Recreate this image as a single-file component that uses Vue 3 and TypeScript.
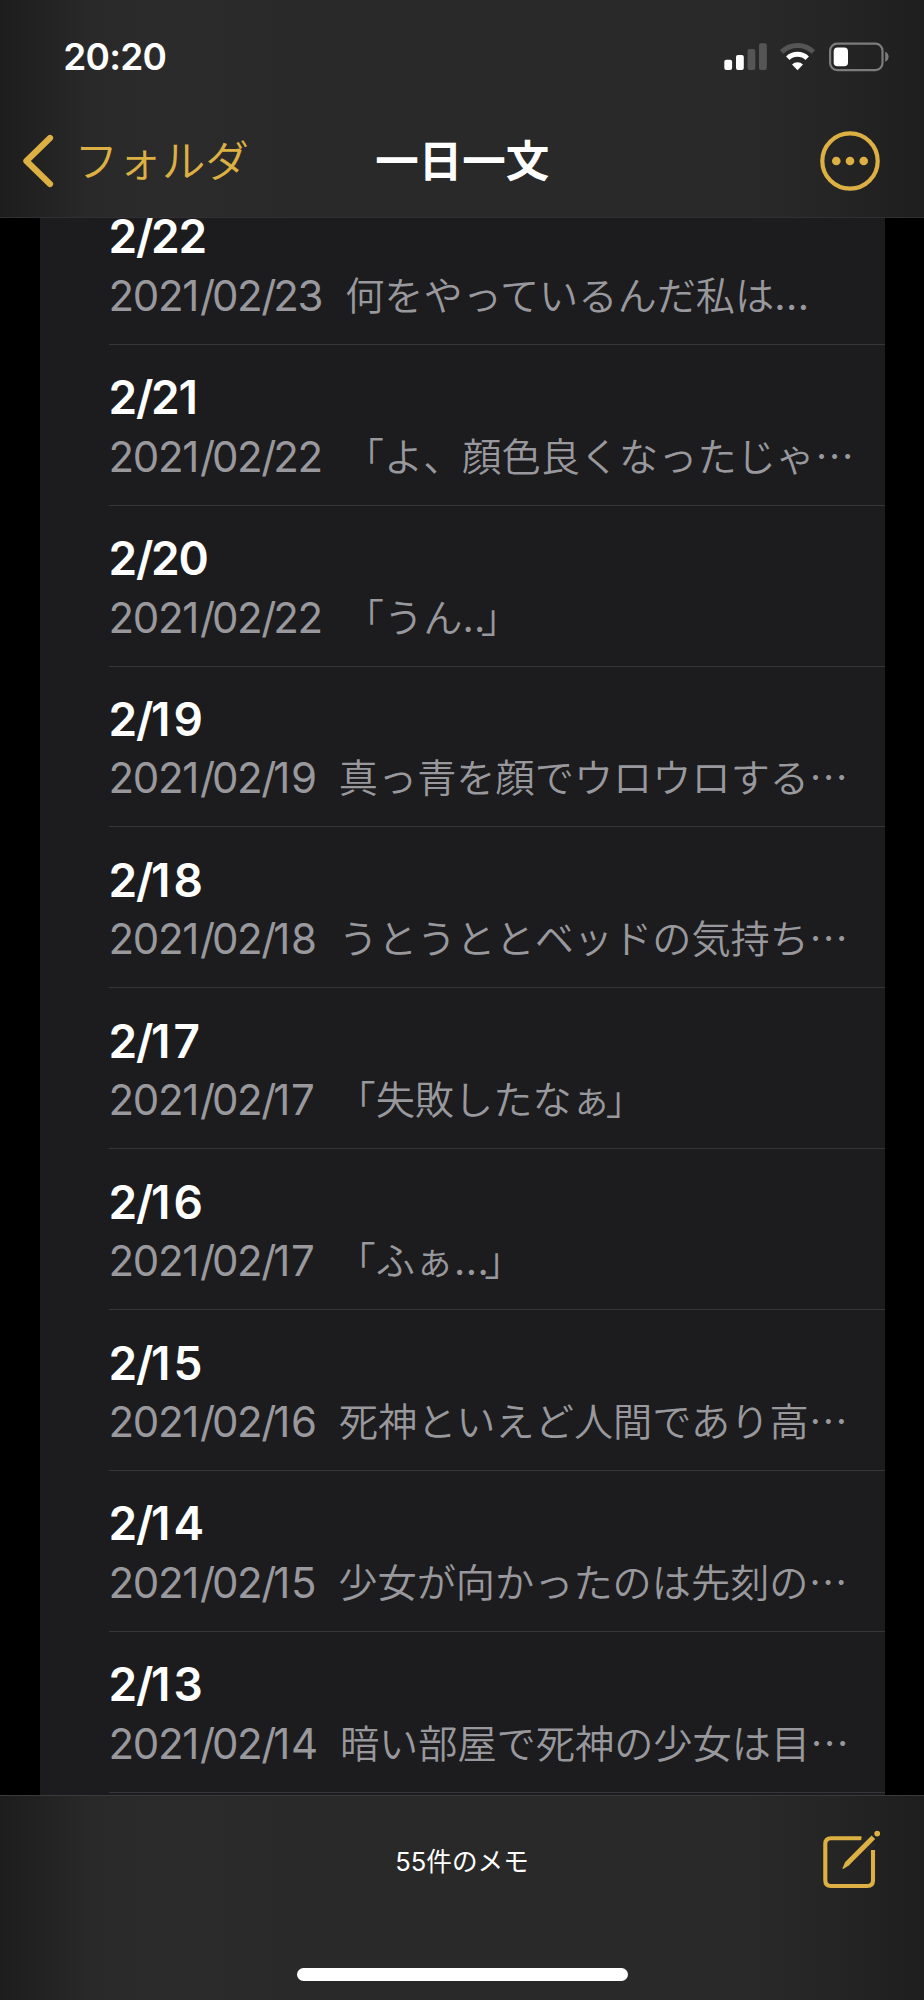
<script setup lang="ts">
interface Note {
  title: string
  date: string
  preview: string
}

const notes: Note[] = [
  { title: '2/22', date: '2021/02/23', preview: '何をやっているんだ私は...' },
  { title: '2/21', date: '2021/02/22', preview: '「よ、顔色良くなったじゃ…' },
  { title: '2/20', date: '2021/02/22', preview: '「うん..」' },
  { title: '2/19', date: '2021/02/19', preview: '真っ青を顔でウロウロする…' },
  { title: '2/18', date: '2021/02/18', preview: 'うとうととベッドの気持ち…' },
  { title: '2/17', date: '2021/02/17', preview: '「失敗したなぁ」' },
  { title: '2/16', date: '2021/02/17', preview: '「ふぁ...」' },
  { title: '2/15', date: '2021/02/16', preview: '死神といえど人間であり高…' },
  { title: '2/14', date: '2021/02/15', preview: '少女が向かったのは先刻の…' },
  { title: '2/13', date: '2021/02/14', preview: '暗い部屋で死神の少女は目…' },
]

// Full stops are set in the Latin face; closing brackets are pulled in slightly.
const runs = (text: string): string[] => text.split(/(\.+|」)/).filter(Boolean)
const runClass = (s: string) => ({ stops: s.startsWith('.'), close: s === '」' })

// Slashes and ones are spaced on their own so the figures sit evenly.
const figures = (text: string): string[] => text.split(/([/1])/).filter(Boolean)
const figureClass = (s: string) => ({ slash: s === '/', one: s === '1' })
</script>

<template>
  <div class="screen">
    <header class="top">
      <div class="status">
        <span class="time">20:20</span>
        <svg class="indicators" width="168" height="32" viewBox="0 0 168 32">
          <g fill="#fff">
            <rect x="2.3" y="18.8" width="7.8" height="10.2" rx="2" />
            <rect x="14" y="14" width="7.8" height="15" rx="2" />
          </g>
          <g fill="#555556">
            <rect x="25.5" y="8" width="7.8" height="21" rx="2" />
            <rect x="37" y="2.2" width="7.8" height="26.8" rx="2" />
          </g>
          <path d="M59.6 11A22.6 22.6 0 0 1 91.4 11" fill="none" stroke="#555556" stroke-width="5" />
          <path d="M65.8 17.2A14 14 0 0 1 85.2 17.2" fill="none" stroke="#fff" stroke-width="5" />
          <path d="M75.5 29.2L70 23.6A7.8 7.8 0 0 1 81 23.6Z" fill="#fff" />
          <rect x="108.1" y="2.7" width="52.4" height="26.4" rx="7" fill="none" stroke="#7c7c7d" stroke-width="2.2" />
          <rect x="111.7" y="6.6" width="14.3" height="18.6" rx="3.8" fill="#fff" />
          <path d="M163.2 10.8C165.4 11.6 166.6 13.6 166.6 15.8S165.4 20 163.2 20.8Z" fill="#7c7c7d" />
        </svg>
      </div>
      <nav class="nav">
        <a class="back">
          <svg width="32" height="56" viewBox="0 0 32 56" fill="none" stroke="#dcb043" stroke-width="6.2" stroke-linecap="round" stroke-linejoin="round">
            <path d="M28 5L4.4 28L28 51" />
          </svg>
          <span class="back-label">フォルダ</span>
        </a>
        <h1 class="heading">一日一文</h1>
        <svg class="more" width="60" height="60" viewBox="0 0 60 60">
          <circle cx="30" cy="30" r="27.7" fill="none" stroke="#dcb043" stroke-width="4.2" />
          <g fill="#dcb043">
            <circle cx="16.3" cy="30" r="4.3" />
            <circle cx="30" cy="30" r="4.3" />
            <circle cx="43.7" cy="30" r="4.3" />
          </g>
        </svg>
      </nav>
    </header>

    <main class="body">
      <ul class="list">
        <li v-for="note in notes" :key="note.title" class="row">
          <div class="title"><span v-for="(s, i) in figures(note.title)" :key="i" :class="figureClass(s)">{{ s }}</span></div>
          <div class="detail">
            <span class="date"><span v-for="(s, i) in figures(note.date)" :key="i" :class="figureClass(s)">{{ s }}</span></span>
            <span class="preview"><span v-for="(run, i) in runs(note.preview)" :key="i" :class="runClass(run)">{{ run }}</span></span>
          </div>
        </li>
      </ul>
    </main>

    <footer class="bottom">
      <div class="toolbar">
        <span class="count">55件のメモ</span>
        <svg class="compose" width="60" height="62" viewBox="0 0 60 62">
          <path d="M41.5 8.2H11Q5.3 8.2 5.3 14V50.2Q5.3 56 11 56H47.2Q53 56 53 50.2V20" fill="none" stroke="#dcb043" stroke-width="4.1" />
          <path d="M38 13L46 5L56 15L48 23Z" fill="#262626" />
          <path d="M22.3 38.6L25.2 31.9L51.6 5.4L55.2 9L28.8 35.4L23.2 38.9Z" fill="#dcb043" />
          <circle cx="57.2" cy="3.6" r="2.9" fill="#dcb043" />
        </svg>
      </div>
      <div class="home"></div>
    </footer>
  </div>
</template>

<style>
body {
  margin: 0;
  background: #000;
}
</style>

<style scoped>
.screen {
  width: 924px;
  height: 2000px;
  display: flex;
  flex-direction: column;
  overflow: hidden;
  background: #000;
  color: #fff;
  font-family: Inter, 'Noto Sans CJK JP', sans-serif;
}

.top,
.bottom {
  flex: none;
  box-sizing: border-box;
  background: linear-gradient(90deg, #1d1d1d 0, #222 40px, #292929 90px, #2b2b2c 170px, #292929 300px, #292929 750px, #252525 830px, #1e1e1e 924px);
}

.top {
  height: 218px;
  border-bottom: 1px solid #303032;
}

.status {
  display: flex;
  justify-content: space-between;
  align-items: flex-start;
  height: 105px;
  box-sizing: border-box;
  padding: 41px 34px 0 63.3px;
}

.time {
  font-size: 37px;
  font-weight: 600;
  line-height: 32px;
  letter-spacing: -0.8px;
}

.nav {
  display: grid;
  grid-template-columns: 1fr auto 1fr;
  align-items: center;
  height: 112px;
  padding: 0 43.7px 0 22px;
  box-sizing: border-box;
}

.back {
  display: flex;
  align-items: center;
  gap: 20.5px;
}

.back-label {
  margin-top: -7px;
  font-size: 43.6px;
  font-weight: 350;
  line-height: 56px;
  color: #dcb043;
  font-family: 'Noto Sans CJK JP', sans-serif;
}

.heading {
  margin: -5px -22px 0 0;
  font: 700 43.5px/56px 'Noto Sans CJK JP', sans-serif;
}

.more {
  justify-self: end;
}

.body {
  flex: 1;
  min-height: 0;
  overflow: hidden;
  padding: 0 39.5px;
}

.list {
  margin: 0;
  padding: 0 0 40px;
  list-style: none;
  background: #1c1c1e;
  display: flow-root;
}

.row {
  height: 160.9px;
  box-sizing: border-box;
  margin-left: 69px;
  padding-top: 27.4px;
  border-bottom: 1px solid #363638;
  white-space: nowrap;
}

.row:first-child {
  margin-top: -34.1px;
}

.title {
  font-size: 46px;
  font-weight: 600;
  line-height: 50px;
  letter-spacing: -1.2px;
}

.title .slash {
  letter-spacing: -2.3px;
}

.title .one {
  letter-spacing: 2.8px;
}

.detail {
  display: flex;
  align-items: baseline;
  gap: 23px;
  margin-top: 2.5px;
  line-height: 60px;
  color: #98989d;
}

.date {
  font-size: 42px;
  letter-spacing: -1.35px;
}

.date .slash {
  letter-spacing: -3.2px;
}

.date .one {
  letter-spacing: 0.7px;
}

.preview {
  position: relative;
  top: -1px;
  font-size: 39.2px;
  font-weight: 350;
  font-family: 'Noto Sans CJK JP', sans-serif;
}

.stops {
  font-family: Inter, sans-serif;
  font-weight: 400;
  letter-spacing: 0.4px;
}

.close {
  margin-left: -5px;
}

.bottom {
  height: 205px;
  border-top: 1px solid #3a3a3b;
}

.toolbar {
  display: grid;
  grid-template-columns: 1fr auto 1fr;
  height: 134px;
  align-items: center;
}

.count {
  grid-column: 2;
  margin-top: -2px;
  font-size: 25.6px;
  line-height: 36px;
}

.compose {
  justify-self: end;
  margin: -5px 44px 0 0;
}

.home {
  width: 331px;
  height: 13px;
  margin: 38px auto 0 297px;
  border-radius: 7px;
  background: #fff;
}
</style>
